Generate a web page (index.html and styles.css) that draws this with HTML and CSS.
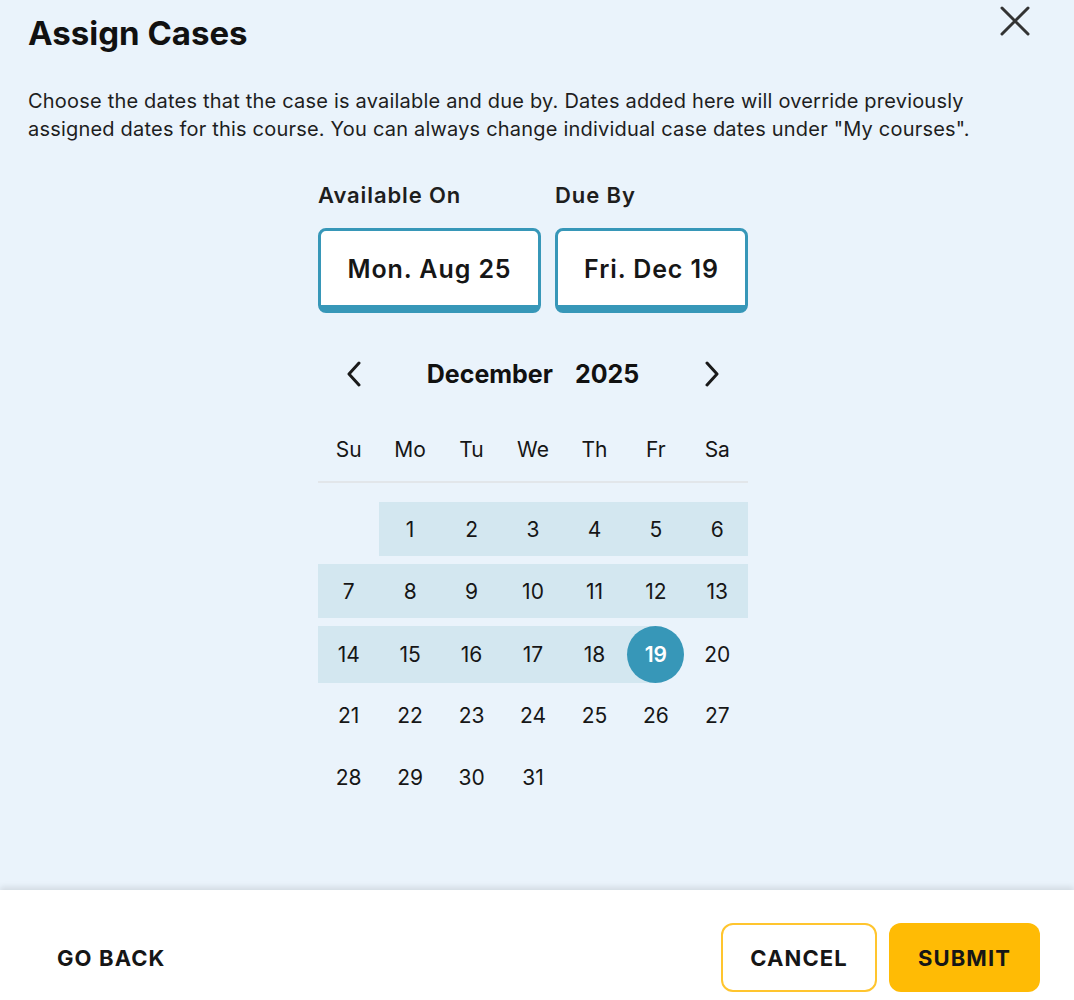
FILE: index.html
```html
<!DOCTYPE html>
<html>
<head>
<meta charset="utf-8">
<link rel="stylesheet" href="styles.css">
</head>
<body>
<div class="modal">
  <div class="content">
    <div class="header">
      <h1 class="title">Assign Cases</h1>
      <button class="close" aria-label="Close">
        <svg width="32" height="32" viewBox="0 0 32 32"><path d="M3 3 L29 29 M29 3 L3 29" stroke="#333" stroke-width="3" stroke-linecap="round" fill="none"/></svg>
      </button>
    </div>
    <p class="intro">Choose the dates that the case is available and due by. Dates added here will override previously assigned dates for this course. You can always change individual case dates under "My courses".</p>
    <div class="picker">
      <div class="fields">
        <div class="field">
          <div class="label">Available On</div>
          <div class="datebox wide">Mon. Aug 25</div>
        </div>
        <div class="field">
          <div class="label">Due By</div>
          <div class="datebox narrow">Fri. Dec 19</div>
        </div>
      </div>
      <div class="month">
        <svg class="arrow" width="16" height="26" viewBox="0 0 16 26"><path d="M13 2 L3 13 L13 24" stroke="#1a1a1a" stroke-width="3" fill="none" stroke-linecap="round" stroke-linejoin="round"/></svg>
        <div class="month-name"><span>December</span><span>2025</span></div>
        <svg class="arrow" width="16" height="26" viewBox="0 0 16 26"><path d="M3 2 L13 13 L3 24" stroke="#1a1a1a" stroke-width="3" fill="none" stroke-linecap="round" stroke-linejoin="round"/></svg>
      </div>
      <div class="weekdays">
        <span>Su</span><span>Mo</span><span>Tu</span><span>We</span><span>Th</span><span>Fr</span><span>Sa</span>
      </div>
      <div class="weeks">
        <div class="week">
          <span class="day"></span><span class="day in">1</span><span class="day in">2</span><span class="day in">3</span><span class="day in">4</span><span class="day in">5</span><span class="day in">6</span>
        </div>
        <div class="week">
          <span class="day in">7</span><span class="day in">8</span><span class="day in">9</span><span class="day in">10</span><span class="day in">11</span><span class="day in">12</span><span class="day in">13</span>
        </div>
        <div class="week">
          <span class="day in">14</span><span class="day in">15</span><span class="day in">16</span><span class="day in">17</span><span class="day in">18</span><span class="day end"><span class="dot">19</span></span><span class="day">20</span>
        </div>
        <div class="week">
          <span class="day">21</span><span class="day">22</span><span class="day">23</span><span class="day">24</span><span class="day">25</span><span class="day">26</span><span class="day">27</span>
        </div>
        <div class="week">
          <span class="day">28</span><span class="day">29</span><span class="day">30</span><span class="day">31</span><span class="day"></span><span class="day"></span><span class="day"></span>
        </div>
      </div>
    </div>
  </div>
  <div class="footer">
    <button class="goback">GO BACK</button>
    <div class="actions">
      <button class="btn cancel">CANCEL</button>
      <button class="btn submit">SUBMIT</button>
    </div>
  </div>
</div>
</body>
</html>
```

FILE: styles.css
```css
* { box-sizing: border-box; }
html, body { margin: 0; padding: 0; }
body {
  font-family: Inter, "Noto Sans", sans-serif;
  color: #161616;
  background: #eaf3fb;
}
.modal {
  width: 1074px;
  height: 1000px;
  display: flex;
  flex-direction: column;
  background: #eaf3fb;
}
.content {
  flex: 1;
  padding: 0 36px 0 28px;
}
.header {
  display: flex;
  justify-content: space-between;
  align-items: flex-start;
}
.title {
  margin: 14px 0 0;
  font-size: 33px;
  font-weight: 700;
  line-height: 38px;
  letter-spacing: 0;
  color: #111;
}
.close {
  margin: 5px 7px 0 0;
  padding: 0;
  border: 0;
  background: none;
  width: 32px;
  height: 32px;
}
.intro {
  margin: 35px 0 0;
  font-size: 20px;
  line-height: 28px;
  letter-spacing: 0.2px;
  color: #1e1e1e;
}
.picker {
  width: 430px;
  margin: 39px auto 0;
}
.fields {
  display: flex;
  gap: 14px;
}
.label {
  font-size: 22px;
  font-weight: 600;
  line-height: 26px;
  letter-spacing: 0.9px;
  color: #1e1e1e;
}
.datebox {
  margin-top: 20px;
  height: 85px;
  border: 3px solid #3797b8;
  border-bottom-width: 8px;
  border-radius: 8px;
  background: #fff;
  display: flex;
  align-items: center;
  justify-content: center;
  font-size: 25px;
  font-weight: 600;
  letter-spacing: 0.9px;
  color: #161616;
  padding-top: 1px;
}
.wide { width: 223px; }
.narrow { width: 193px; }
.month {
  margin-top: 46px;
  height: 30px;
  display: flex;
  align-items: center;
  justify-content: space-between;
  padding: 0 28px 0 28px;
}
.month-name {
  display: flex;
  gap: 22px;
  font-size: 25px;
  font-weight: 700;
  color: #111;
}
.weekdays {
  margin-top: 47px;
  display: grid;
  grid-template-columns: repeat(7, 1fr);
  padding-bottom: 17px;
  border-bottom: 2px solid #e2e6ea;
}
.weekdays span {
  text-align: center;
  font-size: 21px;
  line-height: 28px;
  color: #161616;
}
.weeks {
  margin-top: 19px;
  display: flex;
  flex-direction: column;
  gap: 8px;
}
.week {
  display: grid;
  grid-template-columns: repeat(7, 1fr);
  height: 54px;
}
.day {
  display: flex;
  align-items: center;
  justify-content: center;
  font-size: 21px;
  color: #161616;
}
.day.in { background: #d3e7f0; }
.day.end {
  background: linear-gradient(to right, #d3e7f0 50%, transparent 50%);
}
.dot {
  width: 57px;
  height: 57px;
  flex: none;
  border-radius: 50%;
  background: #3797b8;
  color: #fff;
  font-weight: 600;
  display: flex;
  align-items: center;
  justify-content: center;
}
.footer {
  height: 110px;
  flex: none;
  background: #fff;
  box-shadow: 0 -3px 6px rgba(0, 0, 0, 0.1);
  display: flex;
  align-items: center;
  justify-content: space-between;
  padding: 33px 34px 8px 57px;
}
button { font-family: inherit; cursor: pointer; }
.goback {
  border: 0;
  background: none;
  padding: 0;
  font-size: 22px;
  font-weight: 700;
  color: #161616;
  letter-spacing: 1.1px;
}
.actions {
  display: flex;
  gap: 12px;
}
.btn {
  height: 69px;
  border-radius: 12px;
  font-size: 22px;
  font-weight: 700;
  color: #161616;
  letter-spacing: 1.1px;
  padding: 0;
}
.cancel {
  width: 156px;
  background: #fff;
  border: 2px solid #ffc52e;
}
.submit {
  width: 151px;
  background: #ffbb05;
  border: 0;
}
```
